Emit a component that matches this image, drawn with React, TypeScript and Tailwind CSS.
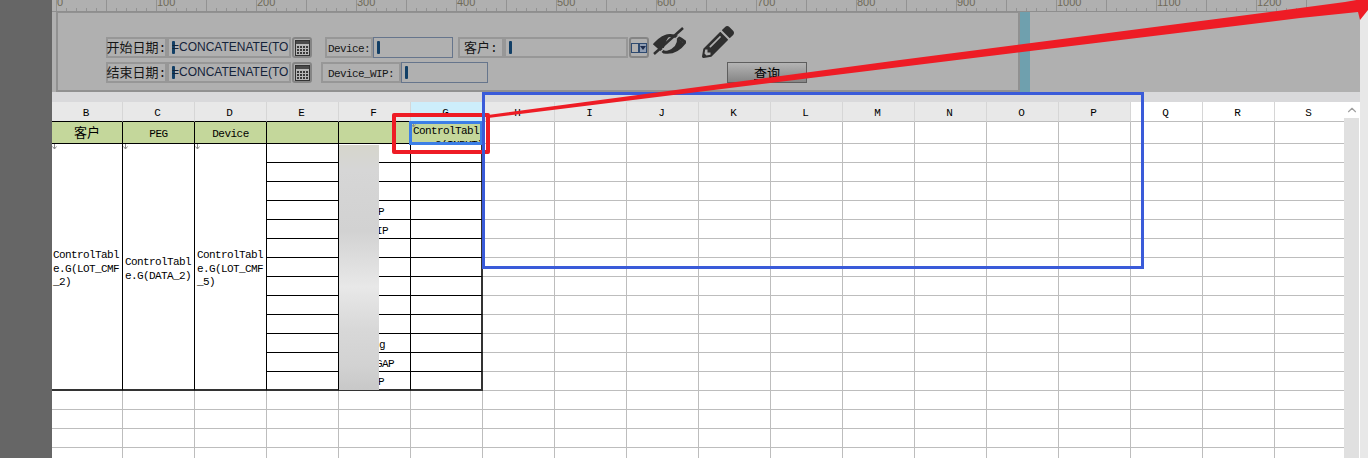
import { ChevronUp } from "lucide-react";
import { FaPencilAlt } from "react-icons/fa";

const cols = ["B", "C", "D", "E", "F", "G", "H", "I", "J", "K", "L", "M", "N", "O", "P", "Q", "R", "S"];
const ticks = Array.from({ length: 131 }, (_, i) => i);
const mono = "font-['Liberation_Mono','Noto_Sans_CJK_SC',monospace]";

// what sticks out from behind the blurred patch in column F
const fText: Record<number, { text: string; pad: string }> = {
  3: { text: "P", pad: "pr-[26px]" },
  4: { text: "IP", pad: "pr-[22px]" },
  10: { text: "g", pad: "pr-[25px]" },
  11: { text: "GAP", pad: "pr-[16px]" },
  12: { text: "P", pad: "pr-[26px]" },
};

function DownMark() {
  return (
    <svg className="absolute left-0 top-0" width="5" height="5" viewBox="0 0 5 5">
      <path d="M2.5 0 V5 M0.5 2.5 L2.5 5 L4.5 2.5" fill="none" stroke="#8a8a8a" strokeWidth="1" />
    </svg>
  );
}

function Ruler() {
  return (
    <div className="flex h-[12px] bg-[#b0b0b0] pl-[4px] overflow-hidden border-b border-[#8e8e8e]">
      {ticks.map((i) => (
        <div key={i} className="relative w-[10px] h-[11px] shrink-0">
          <div className={i % 5 === 0 ? "w-px h-[11px] bg-[#929292]" : "w-px h-[3px] mt-[8px] bg-[#929292]"} />
          {i % 10 === 0 && (
            <span className="absolute left-[1px] top-[-5px] text-[11px] leading-[14px] text-[#6f6a58] font-['Liberation_Sans',sans-serif]">
              {i * 10}
            </span>
          )}
        </div>
      ))}
    </div>
  );
}

function Label({ text, className }: { text: string; className: string }) {
  return (
    <div className={`${className} h-[21px] pt-[3px] shrink-0 flex items-center justify-center border-2 border-[#979797] text-[#161616] ${mono} whitespace-pre`}>
      {text}
    </div>
  );
}

function Input({ width, value, blue }: { width: string; value?: string; blue?: boolean }) {
  return (
    <div className={`${width} h-[21px] shrink-0 flex items-center pl-[3px] ${blue ? "border border-[#66758c]" : "border-2 border-[#979797]"}`}>
      <div className="w-[3px] h-[13px] bg-[#123f66] shrink-0 rounded-[1px]" />
      {value && (
        <span className="text-[12px] text-[#14233a] ml-[-3px] pb-[2px] font-['Liberation_Sans',sans-serif] whitespace-nowrap">{value}</span>
      )}
    </div>
  );
}

function CalendarButton() {
  return (
    <div className="w-[20px] h-[21px] ml-px shrink-0 flex items-center justify-center border-2 border-[#858585] rounded-[3px]">
      <svg width="15" height="16" viewBox="0 0 15 16">
        <rect x="0.5" y="0.5" width="14" height="15" fill="#b8b8b8" stroke="#333" />
        <rect x="1" y="1" width="13" height="3" fill="#4a4a4a" />
        {[6, 9, 12].map((y) =>
          [2, 5, 8, 11].map((x) => <rect key={`${x}-${y}`} x={x} y={y} width="2" height="2" fill="#3a3a3a" />)
        )}
      </svg>
    </div>
  );
}

function DesignerForm() {
  return (
    <div className="w-[964px] h-[80px] shrink-0 ml-[4px] border-2 border-[#919191] border-t-[1px] pl-[48px] pt-[24px] flex flex-col gap-[4px]">
      <div className="flex items-start">
        <Label text="开始日期:" className="w-[61px] text-[13px]" />
        <Input width="w-[124px]" value="=CONCATENATE(TO" />
        <CalendarButton />
        <Label text="Device:" className="w-[48px] ml-[13px] text-[11px] tracking-[-0.6px]" />
        <Input width="w-[80px]" blue />
        <Label text="客户:" className="w-[46px] ml-[5px] text-[13px]" />
        <Input width="w-[124px]" />
        <div className="w-[20px] h-[21px] ml-px shrink-0 flex items-center justify-center gap-0 border-2 border-[#858585] rounded-[3px]">
          <div className="w-[8px] h-[10px] border border-[#2e4a70]" />
          <div className="w-[8px] h-[10px] bg-[#8f9db3] border border-[#2e4a70] flex items-center justify-center">
            <div className="border-x-[3px] border-t-[4px] border-x-transparent border-t-[#1d2c4c]" />
          </div>
        </div>
        <svg width="34" height="30" viewBox="0 0 34 30" className="ml-[3px] mt-[-10px] shrink-0">
          <path d="M3 17 Q17 1 33 15 Q24 27 12 25 Z" fill="none" stroke="#2f2f2f" strokeWidth="3" />
          <path d="M3 17 Q10 8 19 7 Q13 14 12 21 Q6 20 3 17 Z" fill="#2f2f2f" />
          <path d="M17 26 Q27 25 31 15 Q27 12 25 11 Q26 20 15 24 Z" fill="#2f2f2f" />
          <path d="M2 27 L31 1" stroke="#2f2f2f" strokeWidth="2.5" />
          <path d="M6 27 L30 6" stroke="#b0b0b0" strokeWidth="1.5" />
        </svg>
        <FaPencilAlt className="ml-[16px] mt-[-11px] shrink-0 text-[#2f2f2f]" size={32} />
      </div>
      <div className="flex items-start">
        <Label text="结束日期:" className="w-[61px] text-[13px]" />
        <Input width="w-[124px]" value="=CONCATENATE(TO" />
        <CalendarButton />
        <Label text="Device_WIP:" className="w-[80px] ml-[9px] text-[11px] tracking-[-0.6px]" />
        <Input width="w-[87px]" blue />
        <button className="ml-[239px] w-[80px] h-[21px] shrink-0 border border-[#5e5e5e] bg-gradient-to-b from-[#b4b4b4] to-[#858585] text-[13px] leading-[18px] text-black underline font-['Noto_Sans_CJK_SC',sans-serif]">
          查询
        </button>
      </div>
    </div>
  );
}

function SheetGrid() {
  const rows = Array.from({ length: 17 }, (_, i) => i);
  const gray = "border-r border-b border-[#bdbdbd]";
  const black = "border-r border-b border-black";
  return (
    <div className={`grid grid-cols-[71px_repeat(16,72px)_69px] grid-rows-[20px_22px_repeat(17,19px)] bg-white ${mono} text-black`}>
      {cols.map((c, i) => (
        <div
          key={c}
          className={`flex items-center justify-center border-b pt-[3px] pr-[2px] text-[11px] ${i === 17 ? "" : "border-r"} ${i < 6 ? "border-b-black border-r-[#d6d6d6]" : "border-b-[#bdbdbd] border-r-[#d6d6d6]"} ${i === 5 ? "bg-[#cdeefb]" : i < 15 ? "bg-[#e8e8e8]" : "bg-white"}`}
        >
          {c}
        </div>
      ))}

      {cols.map((c, i) => {
        if (i > 5) return <div key={c} className={i === 17 ? "border-b border-[#bdbdbd]" : gray} />;
        if (i === 5) {
          return (
            <div key={c} className={`${black} relative bg-[#c4d79b] text-[11px] leading-[14px] pl-[2px] pt-[2px] overflow-hidden tracking-[-0.6px]`}>
              <DownMark />
              ControlTabl
              <br />
              <span className="pl-[10px]">e.G(INPUT)</span>
            </div>
          );
        }
        const title = ["客户", "PEG", "Device", "", ""][i];
        return (
          <div key={c} className={`${black} bg-[#c4d79b] flex items-center justify-center pt-[3px] ${i === 0 ? "text-[13px]" : "text-[11px] tracking-[-0.5px]"}`}>
            {title}
          </div>
        );
      })}

      {rows.map((r) =>
        cols.map((c, i) => {
          const table = r < 13;
          if (table && i < 3) {
            if (r > 0) return null;
            const lines = [
              ["ControlTabl", "e.G(LOT_CMF", "_2)"],
              ["ControlTabl", "e.G(DATA_2)"],
              ["ControlTabl", "e.G(LOT_CMF", "_5)"],
            ][i];
            return (
              <div key={c} className={`row-span-13 relative border-r border-b-2 border-r-black border-b-[#333] flex flex-col justify-center text-[11px] leading-[13.5px] tracking-[-0.6px] pt-[6px] ${i === 0 ? "pl-px" : "pl-[2px]"}`}>
                <DownMark />
                {lines.map((l) => (
                  <div key={l}>{l}</div>
                ))}
              </div>
            );
          }
          if (table && i < 6) {
            const last = r === 12 ? "border-b-2 border-b-[#333]" : "";
            const edge = i === 5 ? "border-r-2 border-r-[#333]" : "";
            const note = i === 4 ? fText[r] : undefined;
            return (
              <div key={c} className={`${black} ${last} ${edge} flex items-center justify-end pt-[4px] text-[11px] tracking-[-0.6px] ${note ? note.pad : ""}`}>
                {note?.text}
              </div>
            );
          }
          return <div key={c} className={i === 17 ? "border-b border-[#bdbdbd]" : gray} />;
        })
      )}
    </div>
  );
}

export default function App() {
  return (
    <div className="relative flex w-[1368px] h-[458px] overflow-hidden bg-white">
      <div className="w-[52px] shrink-0 bg-[#666666]" />

      <div className="w-[1308px] shrink-0 flex flex-col">
        <Ruler />
        <div className="flex h-[80px] bg-[#b0b0b0]">
          <DesignerForm />
          <div className="w-[10px] shrink-0 bg-[#6fa0ae]" />
        </div>
        <div className="h-[10px] bg-[#d9d9db]" />
        <div className="flex flex-1 min-h-0">
          <SheetGrid />
          <div className="w-[16px] shrink-0 flex flex-col bg-[#e0e0e0] border-r border-white">
            <div className="h-[16px] bg-white flex items-center justify-center">
              <ChevronUp size={14} className="text-[#a0a0a0]" />
            </div>
          </div>
        </div>
      </div>

      <div className="flex-1 bg-[#e8e8e8]" />

      <div className="absolute left-[339px] top-[145px] w-[40px] h-[245px] bg-[linear-gradient(to_bottom,#d6d6cc_0%,#d6d6d6_10%,#d2d2d2_35%,#e8e8e8_58%,#d8d8d8_75%,#d2d2d2_90%,#c8c8c8_100%)] blur-[0.5px]" />

      <div className="absolute left-[409px] top-[121px] w-[74px] h-[24px] border-[3px] border-[#3c7fe6]" />
      <div className="absolute left-[392px] top-[113px] w-[98px] h-[41px] border-4 border-[#ee1c25] rounded-[2px]" />
      <div className="absolute left-[482px] top-[92px] w-[662px] h-[177px] border-[3px] border-[#3a5bd9]" />

      <svg className="absolute left-0 top-0" width="1368" height="130" viewBox="0 0 1368 130">
        <polygon
          points="488,115 900,60 1300,8 1345,2 1368,-2 1368,10 1360,20 1358,12 1300,18 900,67 488,118"
          fill="#ee1c25"
        />
      </svg>
    </div>
  );
}
